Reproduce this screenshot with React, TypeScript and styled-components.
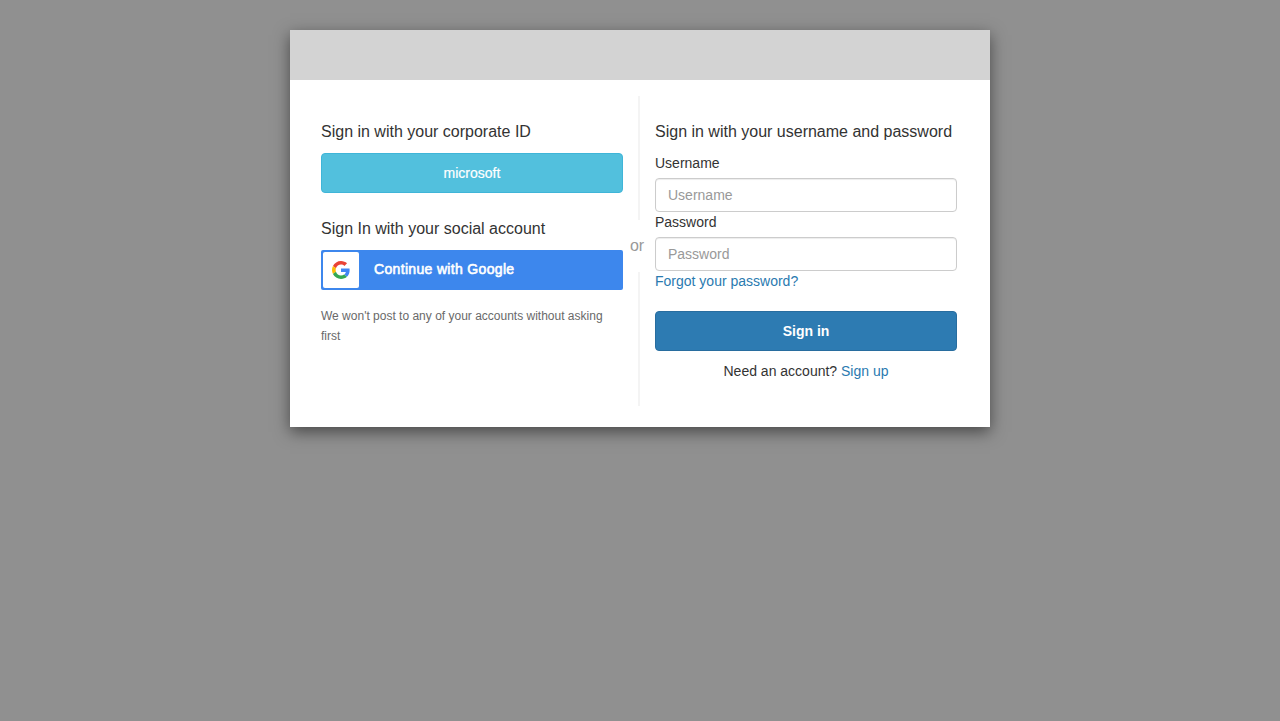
import React from "react";
import styled, { createGlobalStyle } from "styled-components";

const GlobalStyle = createGlobalStyle`
  * { box-sizing: border-box; }
  body {
    margin: 0;
    min-height: 100vh;
    background: #909090;
    color: #333;
    font: 14px/20px "Liberation Sans", Arial, sans-serif;
  }
`;

const Dialog = styled.main`
  width: 700px;
  height: 397px;
  margin: 30px auto 0;
  background: #fff;
  box-shadow: 0 5px 15px rgba(0, 0, 0, 0.5);
`;

const Banner = styled.header`
  height: 50px;
  background: #d3d3d3;
`;

const Content = styled.div`
  display: flex;
  height: 326px;
  padding: 16px 33px 0 31px;
`;

const Column = styled.section`
  width: 302px;
  padding-top: 25px;
`;

const Heading = styled.h1`
  margin: 0 0 10px;
  font-size: 16px;
  font-weight: 400;
  line-height: 22px;
  white-space: nowrap;
`;

const Separator = styled.div`
  width: 32px;
  display: flex;
  flex-direction: column;
  align-items: center;
`;

const Rule = styled.div<{ $height: number }>`
  width: 2px;
  height: ${(p) => p.$height}px;
  background: #f4f4f4;
`;

const Or = styled.span`
  height: 52px;
  padding-right: 4px;
  color: #999;
  font-size: 16px;
  line-height: 51px;
`;

const Button = styled.button<{ $fill: string; $edge: string; $bold?: boolean }>`
  display: block;
  width: 100%;
  height: 40px;
  padding: 0;
  border: 1px solid ${(p) => p.$edge};
  border-radius: 4px;
  background: ${(p) => p.$fill};
  color: #fff;
  font: inherit;
  font-weight: ${(p) => (p.$bold ? 700 : 400)};
`;

const CorporateButton = styled(Button)`
  margin-bottom: 25px;
  -webkit-text-stroke: 0.2px #fff;
`;

const GoogleButton = styled.button`
  display: flex;
  align-items: center;
  gap: 15px;
  width: 100%;
  height: 40px;
  padding: 2px;
  border: 0;
  border-radius: 2px;
  background: #3d87ed;
  color: #fff;
  font: inherit;
  -webkit-text-stroke: 0.6px #fff;
  letter-spacing: 0.33px;
`;

const GoogleText = styled.span`
  padding-bottom: 2px;
`;

const LogoTile = styled.span`
  display: flex;
  align-items: center;
  justify-content: center;
  width: 36px;
  height: 36px;
  border-radius: 2px;
  background: #fff;
`;

const Note = styled.p`
  margin: 16px 0 0;
  color: #696969;
  font-size: 12px;
`;

const Label = styled.label`
  display: block;
  margin-bottom: 5px;
`;

const Input = styled.input`
  display: block;
  width: 100%;
  height: 34px;
  padding: 6px 12px;
  border: 1px solid #ccc;
  border-radius: 4px;
  box-shadow: inset 0 1px 1px rgba(0, 0, 0, 0.075);
  font: inherit;
  &::placeholder { color: #999; opacity: 1; }
`;

const Link = styled.a`
  color: #2a7ab0;
  text-decoration: none;
`;

const ForgotRow = styled.div`
  margin-bottom: 20px;
`;

const SignUp = styled.p`
  margin: 10px 0 0;
  text-align: center;
`;

const GoogleLogo = () => (
  <svg width="18" height="18" viewBox="0 0 48 48" aria-hidden="true">
    <path fill="#EA4335" d="M24 9.5c3.54 0 6.71 1.22 9.21 3.6l6.85-6.85C35.9 2.38 30.47 0 24 0 14.62 0 6.51 5.38 2.56 13.22l7.98 6.19C12.43 13.72 17.74 9.5 24 9.5z" />
    <path fill="#4285F4" d="M46.98 24.55c0-1.57-.15-3.09-.38-4.55H24v9.02h12.94c-.58 2.96-2.26 5.48-4.78 7.18l7.73 6c4.51-4.18 7.09-10.36 7.09-17.65z" />
    <path fill="#FBBC05" d="M10.53 28.59c-.48-1.45-.76-2.99-.76-4.59s.27-3.14.76-4.59l-7.98-6.19C.92 16.46 0 20.12 0 24c0 3.88.92 7.54 2.56 10.78l7.97-6.19z" />
    <path fill="#34A853" d="M24 48c6.48 0 11.93-2.13 15.89-5.81l-7.73-6c-2.15 1.45-4.92 2.3-8.16 2.3-6.26 0-11.57-4.22-13.47-9.91l-7.98 6.19C6.51 42.62 14.62 48 24 48z" />
  </svg>
);

export default function App() {
  return (
    <>
      <GlobalStyle />
      <Dialog>
        <Banner />
        <Content>
          <Column>
            <Heading>Sign in with your corporate ID</Heading>
            <CorporateButton $fill="#52c0dd" $edge="#3fb5d8">microsoft</CorporateButton>
            <Heading>Sign In with your social account</Heading>
            <GoogleButton>
              <LogoTile><GoogleLogo /></LogoTile>
              <GoogleText>Continue with Google</GoogleText>
            </GoogleButton>
            <Note>We won't post to any of your accounts without asking first</Note>
          </Column>
          <Separator>
            <Rule $height={124} />
            <Or>or</Or>
            <Rule $height={134} />
          </Separator>
          <Column>
            <Heading>Sign in with your username and password</Heading>
            <Label htmlFor="username">Username</Label>
            <Input id="username" placeholder="Username" />
            <Label htmlFor="password">Password</Label>
            <Input id="password" type="password" placeholder="Password" />
            <ForgotRow><Link>Forgot your password?</Link></ForgotRow>
            <Button $fill="#2d7bb2" $edge="#286d9f" $bold>Sign in</Button>
            <SignUp>Need an account? <Link>Sign up</Link></SignUp>
          </Column>
        </Content>
      </Dialog>
    </>
  );
}
